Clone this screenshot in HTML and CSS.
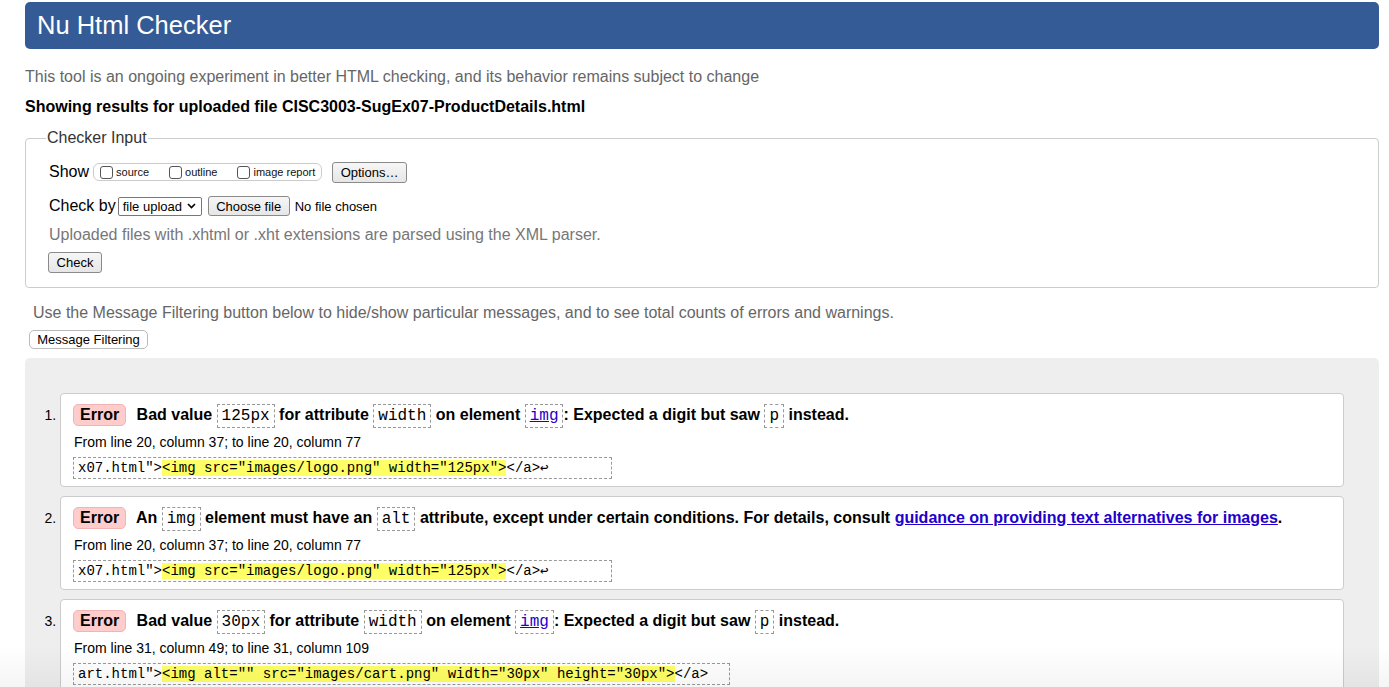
FILE: index.html
```html
<!DOCTYPE html>
<html lang="en">
<head>
<meta charset="utf-8">
<title>Nu Html Checker</title>
<link rel="stylesheet" href="styles.css">
</head>
<body>
<h1 class="title">Nu Html Checker</h1>
<p class="intro">This tool is an ongoing experiment in better HTML checking, and its behavior remains subject to change</p>
<p class="showing">Showing results for uploaded file CISC3003-SugEx07-ProductDetails.html</p>

<fieldset class="checker">
  <legend>Checker Input</legend>
  <div class="row">
    <span class="lbl">Show</span>
    <span class="opts">
      <span class="opt"><span class="cb"></span>source</span>
      <span class="opt"><span class="cb"></span>outline</span>
      <span class="opt"><span class="cb"></span>image report</span>
    </span>
    <span class="btn btn-options">Options…</span>
  </div>
  <div class="row row-check">
    <span class="lbl">Check by</span>
    <span class="select">file upload<svg class="chev" width="9" height="6" viewBox="0 0 9 6"><path d="M1 1l3.5 3.5L8 1" fill="none" stroke="#000" stroke-width="1.6"/></svg></span>
    <span class="btn btn-file">Choose file</span>
    <span class="nofile">No file chosen</span>
  </div>
  <p class="hint">Uploaded files with .xhtml or .xht extensions are parsed using the XML parser.</p>
  <span class="btn btn-check">Check</span>
</fieldset>

<p class="filter-note">Use the Message Filtering button below to hide/show particular messages, and to see total counts of errors and warnings.</p>
<span class="btn btn-filter">Message Filtering</span>

<div class="results">
  <ol class="messages">
    <li class="msg">
      <p class="msg-head"><span class="badge">Error</span> Bad value <code class="c">125px</code> for attribute <code class="c">width</code> on element <a class="c link" href="#">img</a>: Expected a digit but saw <code class="c">p</code> instead.</p>
      <p class="loc">From line 20, column 37; to line 20, column 77</p>
      <div class="extract"><code>x07.html"&gt;<mark>&lt;img src="images/logo.png" width="125px"&gt;</mark>&lt;/a&gt;↩       </code></div>
    </li>
    <li class="msg">
      <p class="msg-head"><span class="badge">Error</span> An <code class="c">img</code> element must have an <code class="c">alt</code> attribute, except under certain conditions. For details, consult <a class="ulink" href="#">guidance on providing text alternatives for images</a>.</p>
      <p class="loc">From line 20, column 37; to line 20, column 77</p>
      <div class="extract"><code>x07.html"&gt;<mark>&lt;img src="images/logo.png" width="125px"&gt;</mark>&lt;/a&gt;↩       </code></div>
    </li>
    <li class="msg">
      <p class="msg-head"><span class="badge">Error</span> Bad value <code class="c">30px</code> for attribute <code class="c">width</code> on element <a class="c link" href="#">img</a>: Expected a digit but saw <code class="c">p</code> instead.</p>
      <p class="loc">From line 31, column 49; to line 31, column 109</p>
      <div class="extract"><code>art.html"&gt;<mark>&lt;img alt="" src="images/cart.png" width="30px" height="30px"&gt;</mark>&lt;/a&gt;  </code></div>
    </li>
  </ol>
</div>
<div class="fade"></div>
</body>
</html>
```
FILE: styles.css
```css
html, body {
  margin: 0;
  padding: 0;
  background: #fff;
}
body {
  font-family: "Liberation Sans", Arial, Helvetica, sans-serif;
  font-size: 16px;
  color: #000;
  padding: 2px 10px 0 25px;
  overflow: hidden;
  height: 687px;
  box-sizing: border-box;
}
.title {
  margin: 0;
  background: #345b96;
  color: #fff;
  font-size: 25.5px;
  font-weight: normal;
  line-height: 47px;
  height: 47px;
  padding: 0 12px;
  border-radius: 5px;
}
.intro {
  margin: 18px 0 0;
  color: #666;
  line-height: 20px;
}
.showing {
  margin: 10px 0 0;
  font-weight: bold;
  line-height: 20px;
}
.checker {
  margin: 12px 0 0;
  padding: 10px 23px 14px 23px;
  border: 1px solid #ccc;
  border-radius: 4px;
}
.checker legend {
  padding: 0 1px;
  margin-left: -3px;
  color: #333;
  line-height: 18px;
}
.row {
  display: flex;
  align-items: center;
  height: 22px;
  margin-top: 4px;
}
.row-check {
  margin-top: 12px;
}
.lbl {
  margin-right: 4px;
}
.opts {
  display: inline-flex;
  align-items: center;
  border: 1px solid #ccc;
  border-radius: 6px;
  height: 18px;
  padding: 0 0 0 6px;
  width: 229px;
  box-sizing: border-box;
}
.opt {
  display: inline-flex;
  align-items: center;
  font-size: 11px;
  color: #111;
  margin-right: 20px;
}
.opt:last-child {
  margin-right: 0;
}
.cb {
  display: inline-block;
  width: 13px;
  height: 13px;
  border: 1px solid #555;
  border-radius: 3px;
  margin-right: 3px;
  box-sizing: border-box;
}
.btn {
  display: inline-flex;
  align-items: center;
  justify-content: center;
  font-family: "Liberation Sans", Arial, sans-serif;
  font-size: 13px;
  color: #000;
  background: linear-gradient(#f6f6f6, #e6e6e6);
  border: 1px solid #8a8a8a;
  border-radius: 3px;
  box-sizing: border-box;
  height: 21px;
}
.btn-options {
  margin-left: 10px;
  width: 75px;
}
.select {
  display: inline-flex;
  align-items: center;
  gap: 4px;
  font-size: 13px;
  height: 19px;
  box-sizing: border-box;
  border: 1px solid #777;
  border-radius: 2px;
  padding: 0 4px 0 4px;
  width: 84px;
  margin-left: -2px;
  background: #fff;
}
.chev {
  margin-left: 1px;
}
.btn-file {
  margin-left: 6px;
  width: 82px;
  height: 20px;
}
.nofile {
  font-size: 13px;
  margin-left: 5px;
}
.hint {
  margin: 8px 0 0;
  color: #777;
  line-height: 20px;
}
.btn-check {
  margin-top: 7px;
  margin-left: -1px;
  width: 54px;
}
.filter-note {
  margin: 15px 0 0 8px;
  color: #666;
  line-height: 20px;
}
.btn-filter {
  margin: 7px 0 0 4px;
  width: 119px;
  height: 19px;
  border-color: #bbb;
  border-radius: 5px;
  background: #fff;
  font-size: 13px;
}
.results {
  margin-top: 9px;
  background: #eee;
  border-radius: 5px 5px 0 0;
  padding: 35px 35px 20px 35px;
  min-height: 400px;
}
.messages {
  margin: 0;
  padding: 0;
  list-style: decimal outside;
}
.messages li::marker {
  font-size: 14px;
}
.msg {
  background: #fff;
  border: 1px solid #ccc;
  border-radius: 4px;
  padding: 9px 12px 7px;
  margin-bottom: 9px;
}
.msg-head {
  margin: 0;
  font-weight: bold;
  line-height: 24px;
}
.badge {
  display: inline-block;
  background: #fcc;
  border: 1px solid #f2b3b3;
  border-radius: 5px;
  padding: 0 6px 0 6px;
  line-height: 20px;
  margin-right: 6px;
}
.c {
  font-family: "Liberation Mono", "Courier New", monospace;
  font-weight: normal;
  font-size: 16px;
  border: 1px dashed #999;
  padding: 2px 4px;
  color: #000;
}
.link {
  color: #2200cc;
  text-decoration: underline;
}
.ulink {
  color: #2200cc;
  text-decoration: underline;
}
.loc {
  margin: 6px 0 0 1px;
  font-size: 14px;
  line-height: 16px;
}
.extract {
  display: block;
  width: fit-content;
  margin-top: 7px;
  border: 1px dashed #999;
  padding: 2px 4px;
  font-family: "Liberation Mono", "Courier New", monospace;
  font-size: 14px;
  line-height: 16px;
}
.extract code {
  font-family: inherit;
  white-space: pre;
}
.extract mark {
  background: #ffff66;
  color: #000;
}
.fade {
  position: fixed;
  left: 0;
  right: 0;
  bottom: 0;
  height: 40px;
  pointer-events: none;
  background: linear-gradient(rgba(255,255,255,0), rgba(0,0,0,0.04));
}
```
